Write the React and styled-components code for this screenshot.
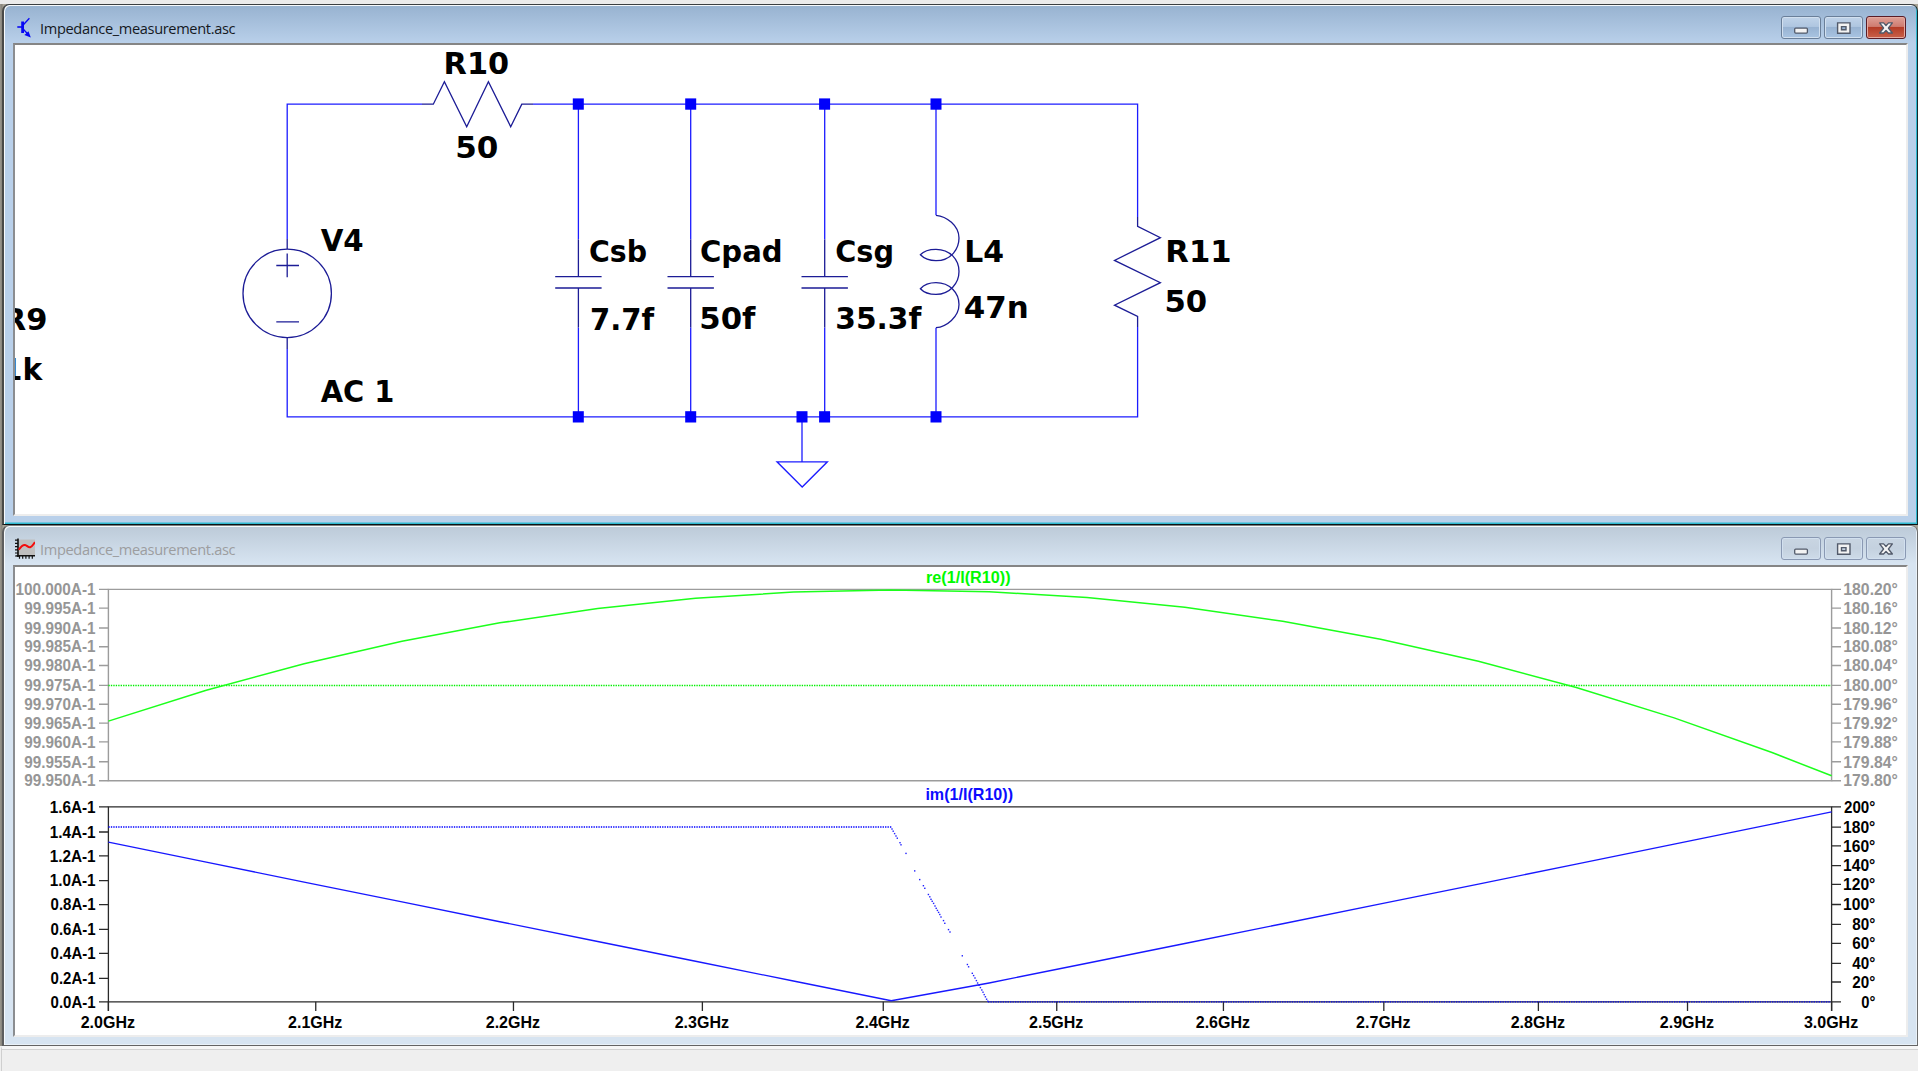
import React from "react";
import styled, { createGlobalStyle } from "styled-components";

const PageStyle = createGlobalStyle`
  html, body { margin: 0; padding: 0; overflow: hidden; }
  * { box-sizing: border-box; }
`;

const Workspace = styled.main`
  width: 1918px;
  height: 1071px;
  display: flex;
  flex-direction: column;
  background: #efefef;
  overflow: hidden;
`;

const ToolbarEdge = styled.div`
  flex: 0 0 4px;
  background: #ebebeb;
`;

const MdiArea = styled.div`
  flex: 0 0 1042px;
  display: flex;
  flex-direction: column;
  padding-left: 2px;
  background: linear-gradient(90deg, #9b978d 0, #85827a 2px, #a8a396 3px);
`;

const Frame = styled.section`
  flex: 0 0 ${(p) => p.$height}px;
  display: flex;
  flex-direction: column;
  padding: 2px 9px 8px 9px;
  border-style: solid;
  border-width: 1px 1px 1px 2px;
  border-color: ${(p) => (p.$active ? "#3b3f42 #16282b #0d1214 #4a4a48" : "#7c7d7e #6b6b6b #636363 #5e5e5e")};
  border-radius: 7px 7px 0 0;
  background: ${(p) =>
    p.$active
      ? "linear-gradient(180deg, #97b2d0 0, #b9d0ea 38px)"
      : "linear-gradient(180deg, #bccad8 0, #d7e4f1 38px)"};
  box-shadow: inset 1px 1px 0 #f7fafc,
    ${(p) => (p.$active ? "inset -1px -1.5px 0 #2fb9d0" : "inset -1px -1px 0 #e9f1f8")};
`;

const TitleBar = styled.header`
  flex: 0 0 ${(p) => p.$height}px;
  display: flex;
  align-items: flex-start;
  padding: 0 2px 0 3px;
`;

const TitleIcon = styled.svg`
  flex: none;
  width: 20px;
  height: 22px;
  margin: 9px 0 0 -1px;
`;

const Title = styled.h1`
  margin: 9px 0 0 5px;
  flex: 1;
  font: 400 14.6px/25px "Open Sans", "Noto Sans", sans-serif;
  letter-spacing: -0.35px;
  color: ${(p) => (p.$active ? "#15191f" : "#9c9da0")};
`;

const Controls = styled.div`
  display: flex;
  gap: 3px;
  padding-top: 9.3px;
`;

const fills = {
  active: "linear-gradient(180deg, #c0d3e9 0, #afc6e0 45%, #98b3d2 50%, #a9c4e2 100%)",
  close: "linear-gradient(180deg, #dea097 0, #cf7c70 45%, #b43c27 50%, #c9614a 100%)",
  idle: "linear-gradient(180deg, #c9d5e2 0, #c4d1df 50%, #cedbe8 100%)",
};

const ControlButton = styled.button`
  width: 39.6px;
  height: 22.8px;
  padding: 0;
  display: grid;
  place-items: center;
  border: 1.2px solid ${(p) => ({ active: "#6a7f99", close: "#5a1c27", idle: "#8a99b3" })[p.$tone]};
  border-radius: 3px;
  background: ${(p) => fills[p.$tone]};
  box-shadow: inset 0 0 0 1px ${(p) => (p.$tone === "close" ? "#e5aaa0" : "#d2e0ef")};
`;

const Glyph = styled.svg`
  width: 20px;
  height: 16px;
  display: block;
`;

const Client = styled.div`
  flex: 1;
  min-height: 0;
  border-style: solid;
  border-width: 2px;
  border-color: #858585 #ededed #ededed #8b8d90;
  background: #fff;
`;

const Canvas = styled.svg`
  display: block;
  width: 100%;
  height: 100%;
`;

const StatusBar = styled.footer`
  flex: 1;
  margin-left: 1px;
  border-left: 1px solid #cfcfcf;
  border-top: 3px solid #f6f6f6;
  background: #efefef;
  box-shadow: inset 0 1px 0 #d2d2d2;
`;

const measurer = document.createElement("canvas").getContext("2d");

/* Text whose inked edges run from x1 to x2 with its baseline at y. */
function InkText({ x1, x2, y, font, fill, children }) {
  measurer.font = `bold ${font.size}px ${font.family}`;
  const m = measurer.measureText(children);
  const ink = m.actualBoundingBoxLeft + m.actualBoundingBoxRight;
  const sx = (x2 - x1) / ink;
  return (
    <text
      transform={`translate(${x1 + m.actualBoundingBoxLeft * sx} ${y}) scale(${sx} 1)`}
      fontFamily={font.family}
      fontSize={font.size}
      fontWeight="700"
      fill={fill}
    >
      {children}
    </text>
  );
}

const labelFont = { size: 31, family: '"DejaVu Sans Condensed", "DejaVu Sans", sans-serif' };
const axisFont = { size: 15.8, family: '"Liberation Sans", Arial, sans-serif' };

const schematicLabels = [
  ["R10", 445.7, 508.7, 74.2],
  ["50", 457.5, 498, 158.2],
  ["V4", 320.7, 363.3, 251],
  ["AC 1", 320.7, 393, 402.3],
  ["Csb", 590, 646, 261.7],
  ["7.7f", 591, 655, 329.5],
  ["Cpad", 701, 780.6, 261.7],
  ["50f", 701.5, 756.4, 329.3],
  ["Csg", 836.3, 892, 261.7],
  ["35.3f", 836.3, 922.3, 329.3],
  ["L4", 966.5, 1003.7, 261.7],
  ["47n", 964.8, 1026.6, 318.3],
  ["R11", 1167.5, 1230, 261.7],
  ["50", 1166.6, 1206.7, 311.7],
  ["R9", 5, 46, 329.6],
  ["1k", 5, 43.8, 379.6],
];

const nodes = [
  [578.3, 104], [690.7, 104], [824.6, 104], [936, 104],
  [578.3, 416.8], [690.7, 416.8], [802, 416.8], [824.6, 416.8], [936, 416.8],
];

function Capacitor({ x }) {
  return (
    <>
      <path d={`M${x} 104V239.5M${x} 327.5V416.8`} stroke="#1c1cff" />
      <path d={`M${x} 239.5V276.7M${x - 23.2} 276.7H${x + 23.2}M${x - 23.2} 288H${x + 23.2}M${x} 288V327.5`} stroke="#1c1c96" />
    </>
  );
}

function Schematic() {
  return (
    <Canvas viewBox="15 45 1891 469" preserveAspectRatio="none">
      <g fill="none" strokeWidth="1.3">
        <path
          stroke="#1c1cff"
          d="M287.2 239V104.2H422M533 104.2H1137.6V217M1137.6 327V416.8H287.2V349M936 104V215.3M936 327.7V416.8M802 416.8V461.8M777 461.8H827.4L802.2 487Z"
        />
        <path
          stroke="#1c1c96"
          d="M422 104.2H433.3L444.4 81.8L466.7 126.7L488.4 81.8L510.7 126.7L521.8 104.2H533M287.2 239V249M287.2 338V349M276.3 265.5H299M287.2 253.5V277.3M276.3 321.8H299M1137.6 217V226.3L1160.4 237.7L1114.5 260.4L1160.4 282.7L1114.5 305.2L1137.6 316.4V327"
        />
        <circle cx="287.2" cy="293.4" r="44.2" stroke="#1c1c96" />
        <path
          stroke="#1c1c96"
          d="M936 215.3C946.5 216.3 959 225.5 959 238C959 248 952 260.7 936 260.7C929 260.7 923 257.5 920.4 254.8C923 251.8 929 249.3 936 249.3C950 249.3 959 259.5 959 271.5C959 283 950 294.4 936 294.4C929 294.4 923 291.5 920.4 288.7C923 285.8 929 282.6 936 282.6C950 282.6 959 293 959 304.5C959 317 946.5 326.7 936 327.7"
        />
        <Capacitor x={578.4} />
        <Capacitor x={690.7} />
        <Capacitor x={824.7} />
      </g>
      {nodes.map(([x, y]) => (
        <rect key={`${x}-${y}`} x={x - 5.5} y={y - 5.6} width="11" height="11.3" fill="#0000fb" />
      ))}
      {schematicLabels.map(([text, x1, x2, y]) => (
        <InkText key={`${text}-${x1}`} x1={x1} x2={x2} y={y} font={labelFont} fill="#000">
          {text}
        </InkText>
      ))}
    </Canvas>
  );
}

const plotLeft = 108.4;
const plotRight = 1831.6;
const freqToX = (ghz) => plotLeft + ((plotRight - plotLeft) * Math.log(ghz / 2)) / Math.log(1.5);

/* AC sweep of 50 + 1 / (1/50 + jB) at 100 points per decade. */
const sweep = [...Array.from({ length: 18 }, (_, n) => 2 * 10 ** (n / 100)), 3].map((ghz) => {
  const w = 2 * Math.PI * ghz * 1e9;
  const q = 50 * (w * 93e-15 - 1 / (w * 47e-9));
  return { x: freqToX(ghz), re: 50 + 50 / (1 + q * q), im: Math.abs((50 * q) / (1 + q * q)) };
});
const toPoints = (fy) => sweep.map((s) => `${s.x},${fy(s)}`).join(" ");
const rePoints = toPoints((s) => 589.9 + ((100 - s.re) / 0.05) * 191);
const imPoints = toPoints((s) => 1001.7 - (s.im / 1.6) * 194.8);

const upperTicks = [589.4, 608.1, 628, 646.7, 665.5, 685.4, 704.3, 723.1, 741.9, 761.8, 780.7];
const upperLeft = ["100.000A-1", "99.995A-1", "99.990A-1", "99.985A-1", "99.980A-1", "99.975A-1", "99.970A-1", "99.965A-1", "99.960A-1", "99.955A-1", "99.950A-1"];
const upperRight = ["180.20°", "180.16°", "180.12°", "180.08°", "180.04°", "180.00°", "179.96°", "179.92°", "179.88°", "179.84°", "179.80°"];
const lowerLeft = [
  ["1.6A-1", 806.8], ["1.4A-1", 832], ["1.2A-1", 855.8], ["1.0A-1", 880.7], ["0.8A-1", 904.7],
  ["0.6A-1", 929.4], ["0.4A-1", 953.4], ["0.2A-1", 978.3], ["0.0A-1", 1001.8],
];
const lowerRight = [
  ["200°", 806.8], ["180°", 827.1], ["160°", 845.8], ["140°", 865.7], ["120°", 884.4], ["100°", 904.5],
  ["80°", 924.4], ["60°", 943.3], ["40°", 963.3], ["20°", 982], ["0°", 1001.8],
];
const degreeStart = { 4: 1844, 3: 1852.3, 2: 1861.2 };
const freqs = [2.0, 2.1, 2.2, 2.3, 2.4, 2.5, 2.6, 2.7, 2.8, 2.9, 3.0];

const phaseDots = [
  [892, 829], [893.2, 831.2], [894.6, 833.6], [896, 836], [897.3, 838.2], [900, 842.7], [901, 844.8],
  [906, 853.4], [914.7, 870.9], [919.7, 879.6], [923.4, 885.7], [924.8, 888.3], [928.4, 894.5],
  [929.8, 896.8], [931, 899.3], [932.2, 901.3], [933.6, 903.4], [935, 906], [936.2, 908.3], [937.4, 910.4],
  [938.6, 912.4], [939.8, 914.5], [941, 917], [943.5, 920.6], [944.8, 923.3], [948.5, 929.6], [950, 932],
  [962.3, 955.8], [967.4, 964.5], [968.6, 966.8], [972.3, 973.3], [973.6, 975.6], [975, 978], [976.4, 980.6],
  [977.6, 983], [979, 985.3], [980.4, 987.6], [981.8, 990], [983, 992.2], [984.2, 994.6], [985.4, 996.8], [986.6, 999.2], [987.8, 1001.2],
];

function Plots() {
  return (
    <Canvas viewBox="15 567 1891 468" preserveAspectRatio="none">
      <g fill="none" stroke="#9c9c9c" strokeWidth="1.4">
        <path d={`M${plotLeft} 589.4H${plotRight}V780.8H${plotLeft}Z`} />
        <path d={upperTicks.map((y) => `M99 ${y}H108.4M1831.6 ${y}H1841`).join("")} />
      </g>
      <path d="M108.4 685.5H1831" stroke="#00f000" strokeWidth="1.3" strokeDasharray="1.35 1.1" />
      <polyline points={rePoints} fill="none" stroke="#1cff1c" strokeWidth="1.5" />
      <InkText x1={927} x2={1010.4} y={582.7} font={axisFont} fill="#00fa00">re(1/I(R10))</InkText>
      {upperTicks.map((y, i) => (
        <React.Fragment key={y}>
          <InkText x1={i ? 24.2 : 16.4} x2={95.8} y={y + 5.7} font={axisFont} fill="#969696">{upperLeft[i]}</InkText>
          <InkText x1={1844.3} x2={1897.6} y={y + 5.7} font={axisFont} fill="#969696">{upperRight[i]}</InkText>
        </React.Fragment>
      ))}

      <g fill="none" stroke="#2a2a2a" strokeWidth="1.3">
        <path d={`M${plotLeft} 1011V806.8H${plotRight}V1011`} />
        <path d="M108.4 1001.8H1831.6" />
        <path d={lowerLeft.map(([, y]) => `M99 ${y}H108.4`).join("")} />
        <path d={lowerRight.map(([, y]) => `M1831.6 ${y}H1841`).join("")} />
        <path d={freqs.map((f) => `M${freqToX(f)} 1001.8V1011`).join("")} />
      </g>
      <path d="M108.4 827H891.5M988 1001.8H1831" stroke="#0000ff" strokeWidth="1.3" strokeDasharray="1.35 1.1" />
      {phaseDots.map(([x, y]) => (
        <rect key={y} x={x - 0.7} y={y - 0.7} width="1.4" height="1.4" fill="#2020ff" />
      ))}
      <polyline points={imPoints} fill="none" stroke="#1818ff" strokeWidth="1.35" />
      <InkText x1={926.4} x2={1012.8} y={800} font={axisFont} fill="#0c0cff">im(1/I(R10))</InkText>
      {lowerLeft.map(([t, y]) => (
        <InkText key={t} x1={50.6} x2={95.8} y={y + 5.7} font={axisFont} fill="#000">{t}</InkText>
      ))}
      {lowerRight.map(([t, y]) => (
        <InkText key={t} x1={degreeStart[t.length]} x2={1875} y={y + 5.7} font={axisFont} fill="#000">{t}</InkText>
      ))}
      {freqs.map((f) => (
        <InkText key={f} x1={freqToX(f) - 27.7} x2={freqToX(f) + 26.7} y={1027.8} font={axisFont} fill="#000">
          {`${f.toFixed(1)}GHz`}
        </InkText>
      ))}
    </Canvas>
  );
}

function SchematicIcon() {
  return (
    <TitleIcon viewBox="0 0 20 22">
      <g stroke="#0808f4" fill="none">
        <path d="M2.3 11H7" strokeWidth="1.6" />
        <path d="M7.6 5.5V17" strokeWidth="2.8" />
        <path d="M8.6 8.5L14.4 2.2M8.6 13.5L13 18.2" strokeWidth="1.3" />
      </g>
      <path d="M15.8 21.5L9.4 19L13.5 15.2Z" fill="#0808f4" />
    </TitleIcon>
  );
}

function WaveformIcon() {
  return (
    <TitleIcon viewBox="0 0 20 22">
      <rect x="2.2" y="2.5" width="18" height="16.5" fill="#bfbfbf" />
      <path d="M3 1.5V20M1.5 18.8H20" stroke="#111" strokeWidth="1.6" />
      <path d="M0 3.2H3M0 6.4H3M0 9.6H3M0 12.8H3M0 16H3M0 19H3M4.5 19V21.8M7.7 19V21.8M10.9 19V21.8M14.1 19V21.8M17.3 19V21.8" stroke="#111" strokeWidth="1.2" />
      <path d="M3.8 12.8C6 9.5 8 7.8 10 8S13 10.7 15.2 10.2S18 7.6 20 5.2" fill="none" stroke="#f40b0b" strokeWidth="2" />
    </TitleIcon>
  );
}

const glyphStroke = "#525a6a";

function WindowControls({ active }) {
  const tone = active ? "active" : "idle";
  return (
    <Controls>
      <ControlButton $tone={tone}>
        <Glyph viewBox="0 0 20 16">
          <rect x="3.7" y="8.1" width="12.7" height="5" rx="1" fill="#f3f3f3" stroke={glyphStroke} strokeWidth="1.3" />
        </Glyph>
      </ControlButton>
      <ControlButton $tone={tone}>
        <Glyph viewBox="0 0 20 16">
          <path d="M3.6 2.9H16V13.3H3.6ZM7.5 6.6V9.7H12V6.6Z" fillRule="evenodd" fill="#f3f3f3" stroke={glyphStroke} strokeWidth="1.4" />
        </Glyph>
      </ControlButton>
      <ControlButton $tone={active ? "close" : tone}>
        <Glyph viewBox="0 0 20 16">
          <path
            d="M3.6 2.9H7.6L10 5.5L12.4 2.9H16.4L12.4 8L16.4 13H12.4L10 10.4L7.6 13H3.6L7.6 8Z"
            fill="#f5f5f5" stroke={glyphStroke} strokeWidth="1.3" strokeLinejoin="round"
          />
        </Glyph>
      </ControlButton>
    </Controls>
  );
}

function MdiWindow({ active, height, titleHeight, icon, children }) {
  return (
    <Frame $active={active} $height={height}>
      <TitleBar $height={titleHeight}>
        {icon}
        <Title $active={active}>Impedance_measurement.asc</Title>
        <WindowControls active={active} />
      </TitleBar>
      <Client>{children}</Client>
    </Frame>
  );
}

export default function App() {
  return (
    <>
      <PageStyle />
      <Workspace>
        <ToolbarEdge />
        <MdiArea>
          <MdiWindow active height={521} titleHeight={36} icon={<SchematicIcon />}>
            <Schematic />
          </MdiWindow>
          <MdiWindow height={521} titleHeight={37} icon={<WaveformIcon />}>
            <Plots />
          </MdiWindow>
        </MdiArea>
        <StatusBar />
      </Workspace>
    </>
  );
}
